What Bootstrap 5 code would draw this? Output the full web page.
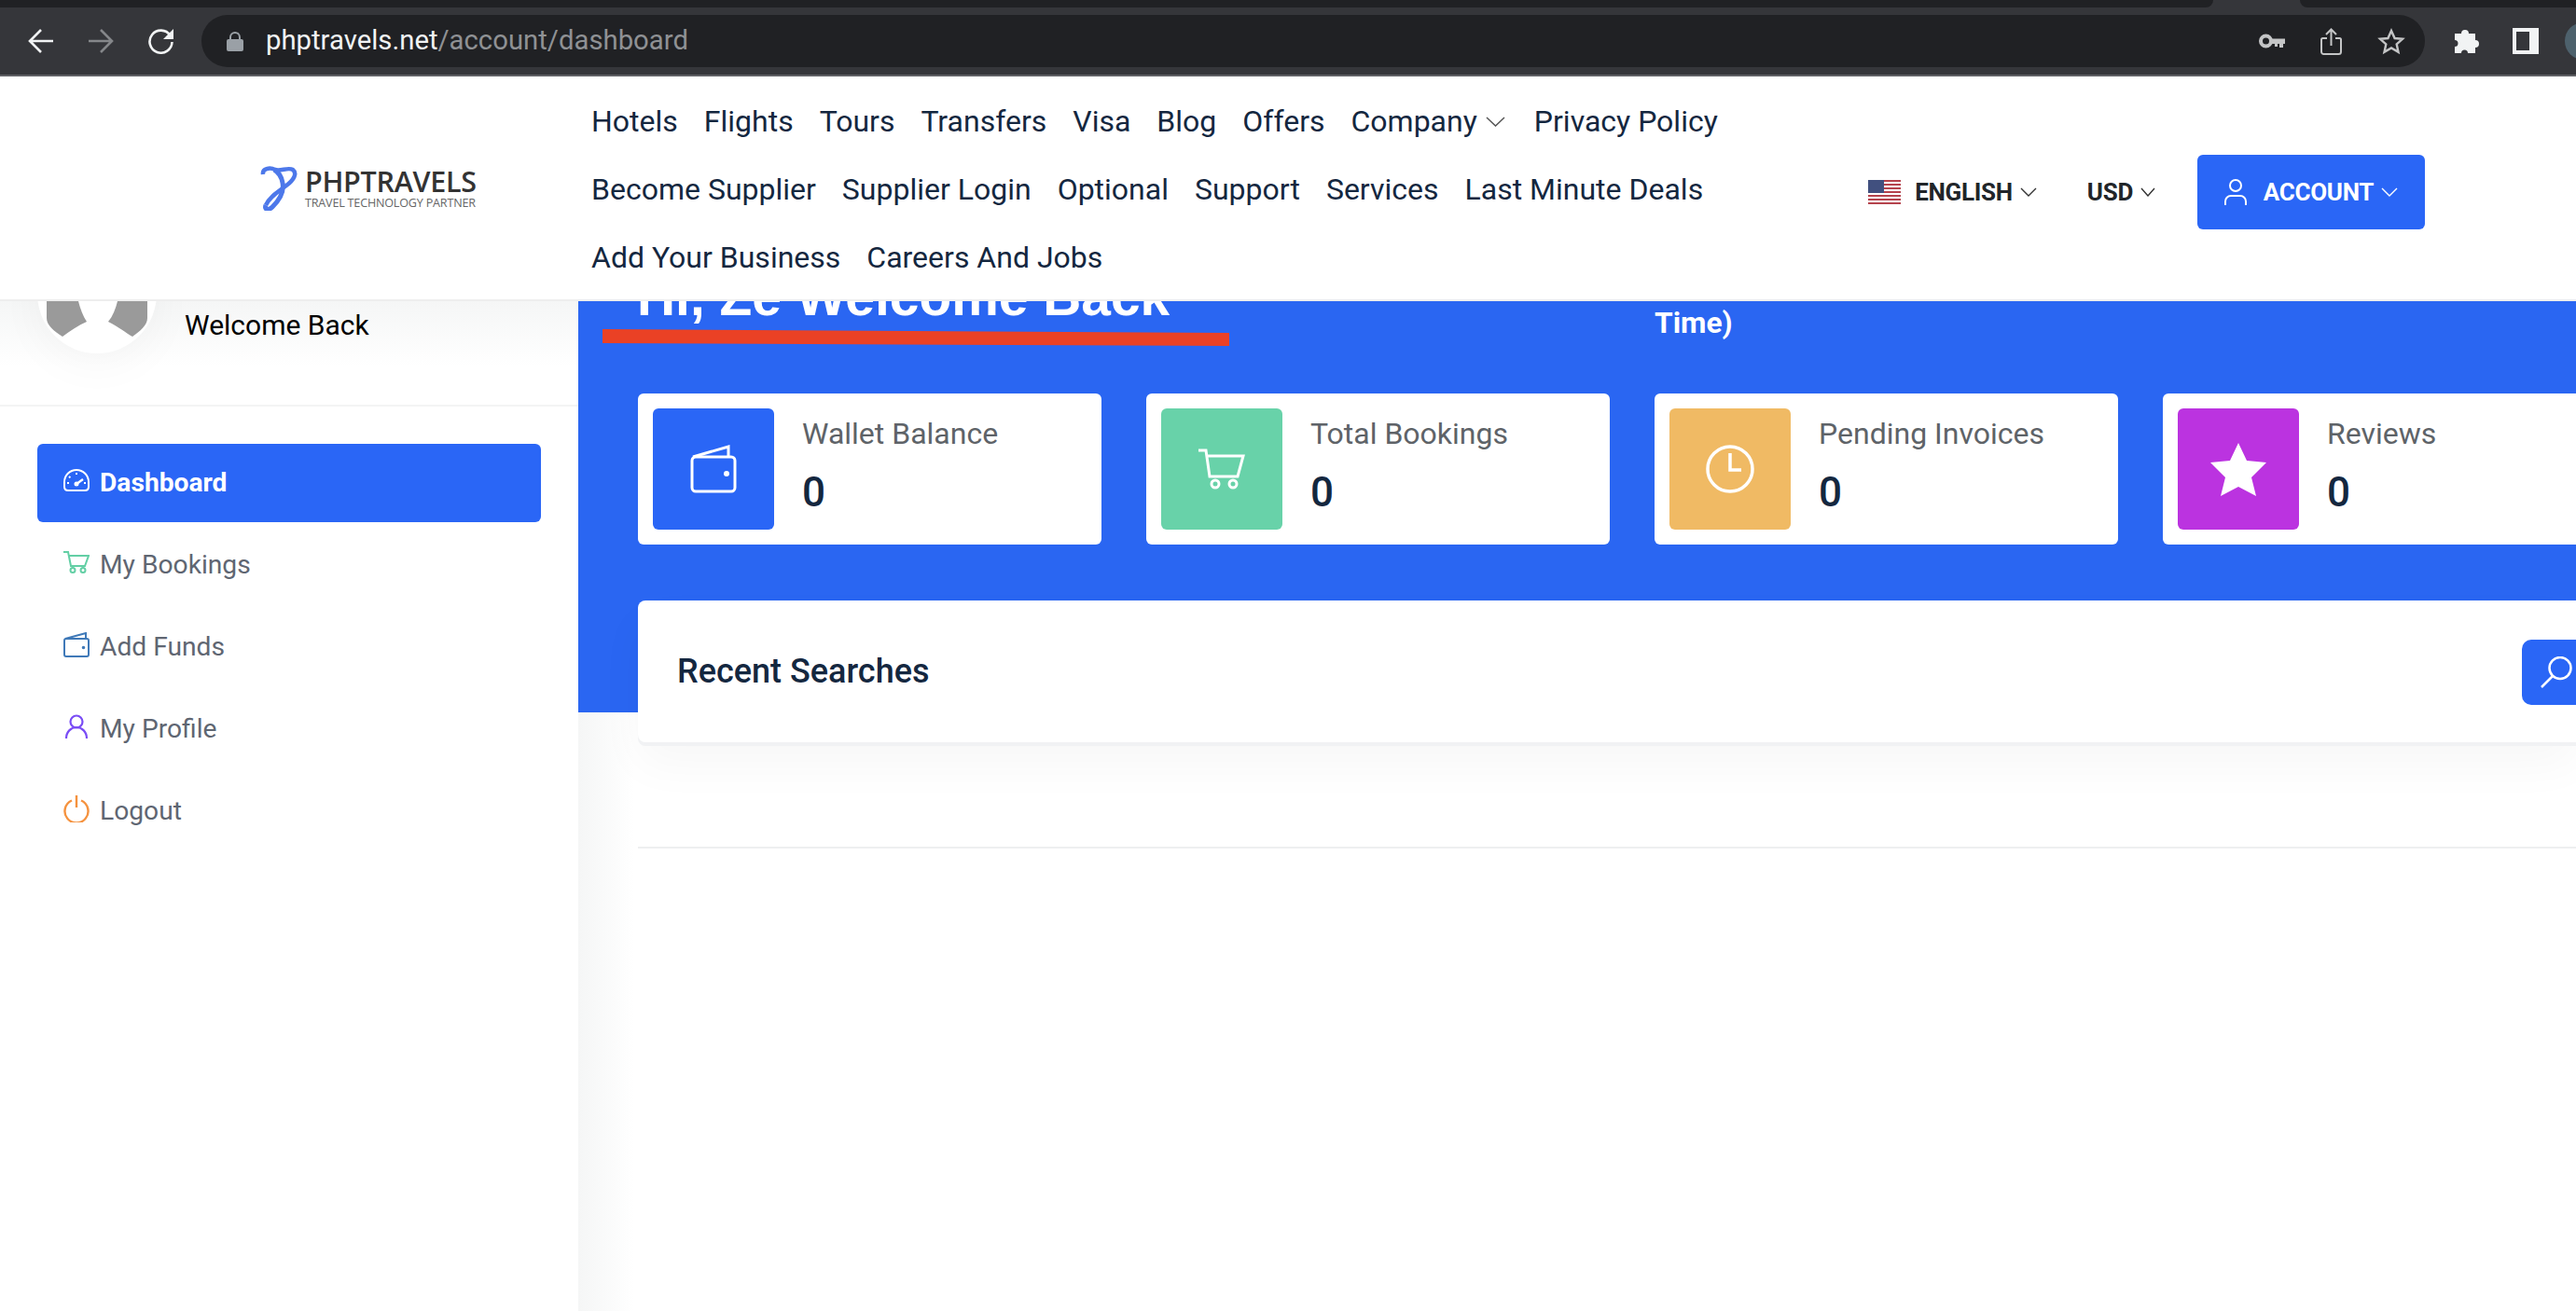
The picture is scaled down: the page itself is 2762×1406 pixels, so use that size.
<!DOCTYPE html>
<html>
    <head>
        <meta charset="UTF-8">
        <meta name="viewport" content="width=device-width, initial-scale=1.0">
        <title>PHPTRAVELS - Dashboard</title>
        <link href="https://cdn.jsdelivr.net/npm/bootstrap@5.3.0/dist/css/bootstrap.min.css" rel="stylesheet">
        <script src="https://cdn.jsdelivr.net/npm/bootstrap@5.3.0/dist/js/bootstrap.bundle.min.js"></script>
        <style>
            html, body {
                height: 100%;
                overflow: hidden;
            }
            body {
                font-family: Roboto, "Liberation Sans", sans-serif;
                background: #fff;
            }
            /* browser bar */
            .tab-strip {
                height: 8px;
                background: #35363a;
            }
            .tab-dark {
                height: 8px;
                background: #202124;
            }
            .tab-dark.first {
                width: 2373px;
                border-bottom-right-radius: 8px;
            }
            .tab-dark.second {
                margin-left: 93px;
                flex: 1;
                border-bottom-left-radius: 8px;
            }
            .tool-bar {
                height: 74px;
                background: #35363a;
                border-bottom: 2px solid #5f6065;
                padding-left: 30px;
            }
            .tool-btn {
                width: 27px;
                height: 28px;
                flex: none;
            }
            .tool-btn.fwd {
                margin-left: 38px;
            }
            .tool-btn.reload {
                width: 29px;
                margin-left: 36px;
            }
            .addr-bar {
                width: 2384px;
                height: 56px;
                flex: none;
                margin-left: 29px;
                background: #202124;
                border-radius: 28px;
                padding: 0 21px 0 27px;
                font-size: 29.3px;
                color: #8f9194;
            }
            .addr-bar b {
                font-weight: 400;
                color: #f1f3f4;
            }
            .addr-icon {
                margin-left: 38px;
                flex: none;
            }
            .tool-btn.puzzle {
                width: 29px;
                margin-left: 30px;
            }
            .tool-btn.panel {
                width: 28px;
                margin-left: 35px;
            }
            .avatar-dot {
                width: 40px;
                height: 40px;
                border-radius: 50%;
                background: #4d616c;
                flex: none;
                margin-left: 28px;
            }
            /* site header */
            .site-head {
                height: 241px;
                padding: 0 162px 0 279px;
                border-bottom: 2px solid #eee;
                background: #fff;
            }
            .brand-box {
                width: 355px;
                flex: none;
            }
            .brand-name {
                font-family: "Open Sans", sans-serif;
                font-size: 30.5px;
                font-weight: 600;
                line-height: 30px;
                color: #333;
                letter-spacing: -.3px;
            }
            .brand-sub {
                font-family: "Open Sans", sans-serif;
                font-size: 12.6px;
                line-height: 14px;
                color: #666;
                margin-top: 2px;
                letter-spacing: -.2px;
                white-space: nowrap;
            }
            .top-links {
                width: 1300px;
                flex: none;
                column-gap: 28px;
                margin-top: 4px;
            }
            .top-links .nav-link {
                padding: 0;
                font-size: 32px;
                line-height: 73px;
                color: #14273f;
            }
            .nav-chev {
                margin: 0 3px 0 1px;
            }
            .head-right {
                margin-top: 9px;
            }
            .head-opt {
                font-size: 26px;
                font-weight: 700;
                color: #212529;
                letter-spacing: -.3px;
                margin-left: 15px;
            }
            .head-opt.cur {
                margin-left: 54px;
            }
            .btn-account {
                width: 244px;
                height: 80px;
                background: #2a66f6;
                border-radius: 6px;
                color: #fff;
                font-size: 26px;
                font-weight: 700;
                letter-spacing: -.3px;
                margin-left: 45px;
                padding: 0;
            }
            .btn-account:hover {
                background: #2a66f6;
                color: #fff;
            }
            .btn-account .acct-user {
                margin-right: 18px;
            }
            /* dashboard */
            .dash-wrap {
                height: 1083px;
                overflow: hidden;
            }
            .side-col {
                width: 620px;
                flex: none;
                background: #fff;
            }
            .side-user {
                height: 113px;
                padding-left: 40px;
                border-bottom: 2px solid #f3f4f4;
                background: linear-gradient(180deg, #f5f6f6, #fff 70px);
                overflow: hidden;
            }
            .face-ring {
                width: 128px;
                height: 128px;
                margin-top: -72px;
                border-radius: 50%;
                background: #fff;
                box-shadow: 0 10px 50px rgba(0, 0, 0, .04);
                flex: none;
            }
            .side-user span {
                margin-left: 30px;
                margin-top: -60px;
                font-size: 30px;
                color: #000;
            }
            .side-menu {
                padding: 40px 40px 0;
            }
            .side-menu .nav-link {
                height: 84px;
                margin-bottom: 4px;
                padding: 0 28px;
                gap: 11px;
                border-radius: 6px;
                font-size: 28.2px;
                color: #5f6672;
            }
            .side-menu .nav-link svg {
                margin-top: -6px;
                flex: none;
            }
            .side-menu .nav-link.active {
                background: #2a66f6;
                color: #fff;
                font-weight: 700;
            }
            .main-col {
                min-width: 0;
                background: linear-gradient(90deg, #f5f6f6, #fff 60px);
            }
            .hero-band {
                height: 441px;
                background: #2a66f2;
                padding: 0 0 0 64px;
                position: relative;
                display: flow-root;
            }
            .hero-top {
                height: 99px;
                display: flow-root;
            }
            .hero-title {
                font-family: "Liberation Sans", Arial, sans-serif;
                font-size: 56.9px;
                font-weight: 700;
                line-height: 64px;
                color: #fff;
                margin: -37px 0 0 -1px;
                white-space: nowrap;
            }
            .hero-time {
                position: absolute;
                left: 1154px;
                top: 7px;
                font-size: 31.7px;
                font-weight: 700;
                color: #fff;
                line-height: 34px;
            }
            .red-mark {
                position: absolute;
                left: 26px;
                top: 30px;
            }
            .stat-row {
                gap: 48px;
                width: max-content;
            }
            .stat-box {
                width: 497px;
                height: 162px;
                padding: 16px;
                background: #fff;
                border-radius: 6px;
                flex: none;
            }
            .stat-icon {
                width: 130px;
                height: 130px;
                border-radius: 6px;
                flex: none;
            }
            .stat-label {
                margin: 9px 0 0 30px;
                font-size: 32px;
                line-height: 36px;
                color: #5e6368;
            }
            .stat-num {
                margin: 19px 0 0 30px;
                font-size: 44px;
                font-weight: 500;
                line-height: 52px;
                color: #14273f;
            }
            .search-box {
                width: 2078px;
                height: 152px;
                margin-top: 60px;
                padding-left: 42px;
                background: #fff;
                border-radius: 8px 0 0 8px;
                box-shadow: 0 4px 0 #f1f2f4, 0 24px 50px rgba(0, 0, 0, .035);
                position: relative;
            }
            .search-box h5 {
                margin: 2px 0 0;
                font-size: 36px;
                font-weight: 500;
                color: #14273f;
            }
            .btn-find {
                width: 58px;
                height: 70px;
                padding: 0;
                margin-top: 2px;
                background: #2a66f6;
                border-radius: 10px 0 0 10px;
                flex: none;
            }
            .btn-find:hover {
                background: #2a66f6;
            }
            .rule-line {
                margin: 144px 0 0 64px;
                height: 2px;
                background: #eeeff0;
            }
        </style>
    </head>

    <body>
        <!-- BROWSER BAR -->
        <div class="tab-strip d-flex">
            <div class="tab-dark first"></div>
            <div class="tab-dark second"></div>
        </div>
        <div class="tool-bar d-flex align-items-center">
            <svg class="tool-btn" viewBox="0 0 27 28" fill="none" stroke="#f1f3f4" stroke-width="2.6"><path d="M27 14H3M14 2 2 14l12 12"/></svg>
            <svg class="tool-btn fwd" viewBox="0 0 27 28" fill="none" stroke="#85878a" stroke-width="2.6"><path d="M0 14h24M13 2l12 12-12 12"/></svg>
            <svg class="tool-btn reload" viewBox="0 0 29 28" fill="none" stroke="#f1f3f4" stroke-width="2.6"><path d="M24.5 8A12 12 0 1 0 26.5 15"/><path d="M28 1v11H17z" fill="#f1f3f4" stroke="none"/></svg>
            <div class="addr-bar d-flex align-items-center">
                <svg width="18" height="21" viewBox="0 0 18 21" class="me-4 flex-shrink-0"><path d="M4 9V6a5 5 0 0 1 10 0v3" fill="none" stroke="#9aa0a6" stroke-width="2"/><rect y="8" width="18" height="13" rx="2" fill="#9aa0a6"/></svg>
                <span><b>phptravels.net</b>/account/dashboard</span>
                <svg class="ms-auto flex-shrink-0" width="28" height="16" viewBox="0 0 28 16"><circle cx="7.5" cy="8" r="5.5" fill="none" stroke="#c4c5c6" stroke-width="4"/><path d="M13 5.5h15V11h-2v4h-4v-4h-2v3h-3v-3h-4z" fill="#c4c5c6"/></svg>
                <svg class="addr-icon" width="23" height="29" viewBox="0 0 23 29" fill="none" stroke="#c4c5c6" stroke-width="2"><path d="M7 11H2.5A1.500 1.500 0 0 0 1 12.500v13A2.500 2.500 0 0 0 3.500 28h16a2.500 2.500 0 0 0 2.500-2.500v-13a1.500 1.500 0 0 0-1.500-1.500H16M11.500 19V2M6 7l5.500-5.500L17 7"/></svg>
                <svg class="addr-icon" width="30" height="29" viewBox="0 0 30 29" fill="none" stroke="#c4c5c6" stroke-width="2.4"><path d="m15 3 3.600 8 8.400.8-6.300 5.600 1.800 8.400L15 21.500 7.500 25.800l1.800-8.400L3 11.800l8.400-.8z"/></svg>
            </div>
            <svg class="tool-btn puzzle" viewBox="0 0 29 28" fill="#f1f3f4"><path d="M2 6h7a4 4 0 1 1 8 0h7v7a4 4 0 1 1 0 8v6H16a3.500 3.500 0 1 0-7 0H2v-7a3.500 3.500 0 1 0 0-7z"/></svg>
            <svg class="tool-btn panel" viewBox="0 0 28 28"><path d="M0 0h28v28H0z" fill="#f1f3f4"/><path d="M4 4h14v20H4z" fill="#35363a"/></svg>
            <div class="avatar-dot"></div>
        </div>

        <!-- HEADER -->
        <header class="site-head d-flex align-items-center">
            <a href="#" class="brand-box d-flex align-items-center text-decoration-none">
                <svg width="40" height="48" viewBox="0 0 40 48" fill="none" stroke="#4d78ea" class="me-2 flex-shrink-0">
                    <path d="M3 9C2 3 10 1 16 4c6 2 14-3 19 0 5 4 1 11-7 17-8 6-18 12-22 21" stroke-width="4.5"/>
                    <path d="M6 42c-2 5 3 6 7 2 7-7 13-16 11-26-1-6-4-11-9-14" stroke-width="5"/>
                </svg>
                <span class="d-block">
                    <span class="brand-name d-block">PHPTRAVELS</span>
                    <span class="brand-sub d-block">TRAVEL TECHNOLOGY PARTNER</span>
                </span>
            </a>
            <ul class="nav top-links">
                <li class="nav-item"><a class="nav-link" href="#">Hotels</a></li>
                <li class="nav-item"><a class="nav-link" href="#">Flights</a></li>
                <li class="nav-item"><a class="nav-link" href="#">Tours</a></li>
                <li class="nav-item"><a class="nav-link" href="#">Transfers</a></li>
                <li class="nav-item"><a class="nav-link" href="#">Visa</a></li>
                <li class="nav-item"><a class="nav-link" href="#">Blog</a></li>
                <li class="nav-item"><a class="nav-link" href="#">Offers</a></li>
                <li class="nav-item"><a class="nav-link d-flex align-items-center gap-2" href="#">Company <svg class="nav-chev" width="21" height="11" viewBox="0 0 21 11" fill="none" stroke="#555" stroke-width="1.5"><path d="m1 1 9.500 9L20 1"/></svg></a></li>
                <li class="nav-item"><a class="nav-link" href="#">Privacy Policy</a></li>
                <li class="nav-item"><a class="nav-link" href="#">Become Supplier</a></li>
                <li class="nav-item"><a class="nav-link" href="#">Supplier Login</a></li>
                <li class="nav-item"><a class="nav-link" href="#">Optional</a></li>
                <li class="nav-item"><a class="nav-link" href="#">Support</a></li>
                <li class="nav-item"><a class="nav-link" href="#">Services</a></li>
                <li class="nav-item"><a class="nav-link" href="#">Last Minute Deals</a></li>
                <li class="nav-item"><a class="nav-link" href="#">Add Your Business</a></li>
                <li class="nav-item"><a class="nav-link" href="#">Careers And Jobs</a></li>
            </ul>
            <div class="head-right d-flex align-items-center ms-auto">
                <svg width="35" height="26" viewBox="0 0 35 26">
                    <rect width="35" height="26" fill="#fff"/>
                    <path d="M0 1h35M0 5h35M0 9h35M0 13h35M0 17h35M0 21h35M0 25h35" stroke="#b5434d" stroke-width="2"/>
                    <rect width="17" height="14" fill="#41507f"/>
                </svg>
                <span class="head-opt">ENGLISH</span>
                <svg class="ms-2" width="18" height="10" viewBox="0 0 18 10" fill="none" stroke="#333" stroke-width="1.4"><path d="m1 1 8 8 8-8"/></svg>
                <span class="head-opt cur">USD</span>
                <svg class="ms-2" width="16" height="10" viewBox="0 0 16 10" fill="none" stroke="#333" stroke-width="1.4"><path d="m1 1 7 8 7-8"/></svg>
                <button class="btn btn-account d-flex align-items-center justify-content-center" type="button">
                    <svg class="acct-user" width="24" height="28" viewBox="0 0 24 28" fill="none" stroke="#fff" stroke-width="2"><circle cx="12" cy="7" r="6"/><path d="M1 28v-4a6 6 0 0 1 6-6h10a6 6 0 0 1 6 6v4"/></svg>
                    ACCOUNT
                    <svg class="ms-2" width="18" height="10" viewBox="0 0 18 10" fill="none" stroke="#fff" stroke-width="1.4"><path d="m1 1 8 8 8-8"/></svg>
                </button>
            </div>
        </header>

        <div class="dash-wrap d-flex">
            <!-- SIDEBAR -->
            <aside class="side-col">
                <div class="side-user d-flex align-items-start">
                    <div class="face-ring d-flex justify-content-center">
                        <svg width="108" height="128" viewBox="0 0 108 128">
                            <g transform="translate(0 72)" fill="#9a9a9a">
                                <path d="M0 0h34c2 8 5 16 9 22-9 4-18 10-26 16C8 32 0 26 0 18z"/>
                                <path d="M108 0H76c-2 8-5 16-10 22 12 6 19 12 26 16 8-6 16-12 16-20z"/>
                            </g>
                        </svg>
                    </div>
                    <span class="align-self-center">Welcome Back</span>
                </div>
                <ul class="nav flex-column side-menu">
                    <li class="nav-item">
                        <a class="nav-link active d-flex align-items-center" href="#">
                            <svg width="28" height="24" viewBox="0 0 28 24" fill="none" stroke="#fff" stroke-width="2"><path d="M5 23h18c2 0 4-1 4-4V14A13 13 0 0 0 1 14v5c0 3 2 4 4 4z"/><path d="M14 16l7-5" stroke-width="2.4"/><circle cx="14" cy="16" r="1.5" fill="#fff"/><path d="M14 4v2M6 8l1.500 1.500M4 15h2M24 15h-2" stroke-dasharray="2 1"/></svg>
                            Dashboard
                        </a>
                    </li>
                    <li class="nav-item">
                        <a class="nav-link d-flex align-items-center" href="#">
                            <svg width="28" height="24" viewBox="0 0 28 24" fill="none" stroke="#63cfa5" stroke-width="2"><path d="M0 1h5l3 15h15l4-11H6"/><circle cx="10" cy="20.5" r="2.5"/><circle cx="21" cy="20.5" r="2.5"/></svg>
                            My Bookings
                        </a>
                    </li>
                    <li class="nav-item">
                        <a class="nav-link d-flex align-items-center" href="#">
                            <svg width="28" height="27" viewBox="0 0 28 27" fill="none" stroke="#3f79b8" stroke-width="2"><rect x="1" y="7" width="26" height="19" rx="2"/><path d="M2 7 24 1v6"/><circle cx="21.5" cy="16.5" r=".8" fill="#3f79b8"/></svg>
                            Add Funds
                        </a>
                    </li>
                    <li class="nav-item">
                        <a class="nav-link d-flex align-items-center" href="#">
                            <svg width="28" height="26" viewBox="0 0 28 26" fill="none" stroke="#7a4df5" stroke-width="2.2"><circle cx="14" cy="8" r="6.5"/><path d="M3 26c0-7 5-12 11-12s11 5 11 12"/></svg>
                            My Profile
                        </a>
                    </li>
                    <li class="nav-item">
                        <a class="nav-link d-flex align-items-center" href="#">
                            <svg width="28" height="29" viewBox="0 0 28 29" fill="none" stroke="#f5923e" stroke-width="2.4"><path d="M9 5.500a12.500 12.500 0 1 0 10 0M14 0v13"/></svg>
                            Logout
                        </a>
                    </li>
                </ul>
            </aside>

            <!-- MAIN -->
            <main class="main-col flex-grow-1">
                <div class="hero-band">
                    <div class="hero-top">
                        <h2 class="hero-title">Hi, Ze Welcome Back</h2>
                    </div>
                    <svg class="red-mark" width="672" height="18" viewBox="0 0 672 18"><path d="M0 0 672 4v14L0 15z" fill="#ea4125"/></svg>
                    <div class="hero-time">Time)</div>
                    <div class="stat-row d-flex">
                        <div class="stat-box d-flex">
                            <div class="stat-icon d-flex align-items-center justify-content-center" style="background:#2a66f6">
                                <svg width="50" height="52" viewBox="0 0 50 52" fill="none" stroke="#fff" stroke-width="3"><rect x="2" y="13" width="46" height="37" rx="4"/><path d="M3 13 41 2v11"/><circle cx="39" cy="31" r="1.5" fill="#fff"/></svg>
                            </div>
                            <div>
                                <p class="stat-label">Wallet Balance</p>
                                <p class="stat-num mb-0">0</p>
                            </div>
                        </div>
                        <div class="stat-box d-flex">
                            <div class="stat-icon d-flex align-items-center justify-content-center" style="background:#68d2a9">
                                <svg width="52" height="44" viewBox="0 0 52 44" fill="none" stroke="#fff" stroke-width="3"><path d="M1 2h8l4 28h30l6-22H10"/><circle cx="19" cy="38" r="4"/><circle cx="38" cy="38" r="4"/></svg>
                            </div>
                            <div>
                                <p class="stat-label">Total Bookings</p>
                                <p class="stat-num mb-0">0</p>
                            </div>
                        </div>
                        <div class="stat-box d-flex">
                            <div class="stat-icon d-flex align-items-center justify-content-center" style="background:#f0ba64">
                                <svg width="52" height="52" viewBox="0 0 52 52" fill="none" stroke="#fff" stroke-width="3.5"><circle cx="26" cy="26" r="24"/><path d="M26 9v18h12"/></svg>
                            </div>
                            <div>
                                <p class="stat-label">Pending Invoices</p>
                                <p class="stat-num mb-0">0</p>
                            </div>
                        </div>
                        <div class="stat-box d-flex">
                            <div class="stat-icon d-flex align-items-center justify-content-center" style="background:#bb33e0">
                                <svg width="60" height="57" viewBox="0 0 60 57" fill="#fff"><path d="M30 0 39 19 60 21 44 37 49 57 30 47 11 57 16 37 0 21 21 19z"/></svg>
                            </div>
                            <div>
                                <p class="stat-label">Reviews</p>
                                <p class="stat-num mb-0">0</p>
                            </div>
                        </div>
                    </div>
                    <div class="search-box d-flex align-items-center justify-content-between">
                        <h5>Recent Searches</h5>
                        <button class="btn btn-find d-flex align-items-center" type="button" aria-label="Search">
                            <svg class="ms-3" width="38" height="34" viewBox="0 0 38 34" fill="none" stroke="#fff" stroke-width="2.5"><circle cx="24" cy="12.5" r="11.5"/><path d="M16 21 4 33"/></svg>
                        </button>
                    </div>
                </div>
                <div class="rule-line"></div>
            </main>
        </div>
    </body>
</html>
